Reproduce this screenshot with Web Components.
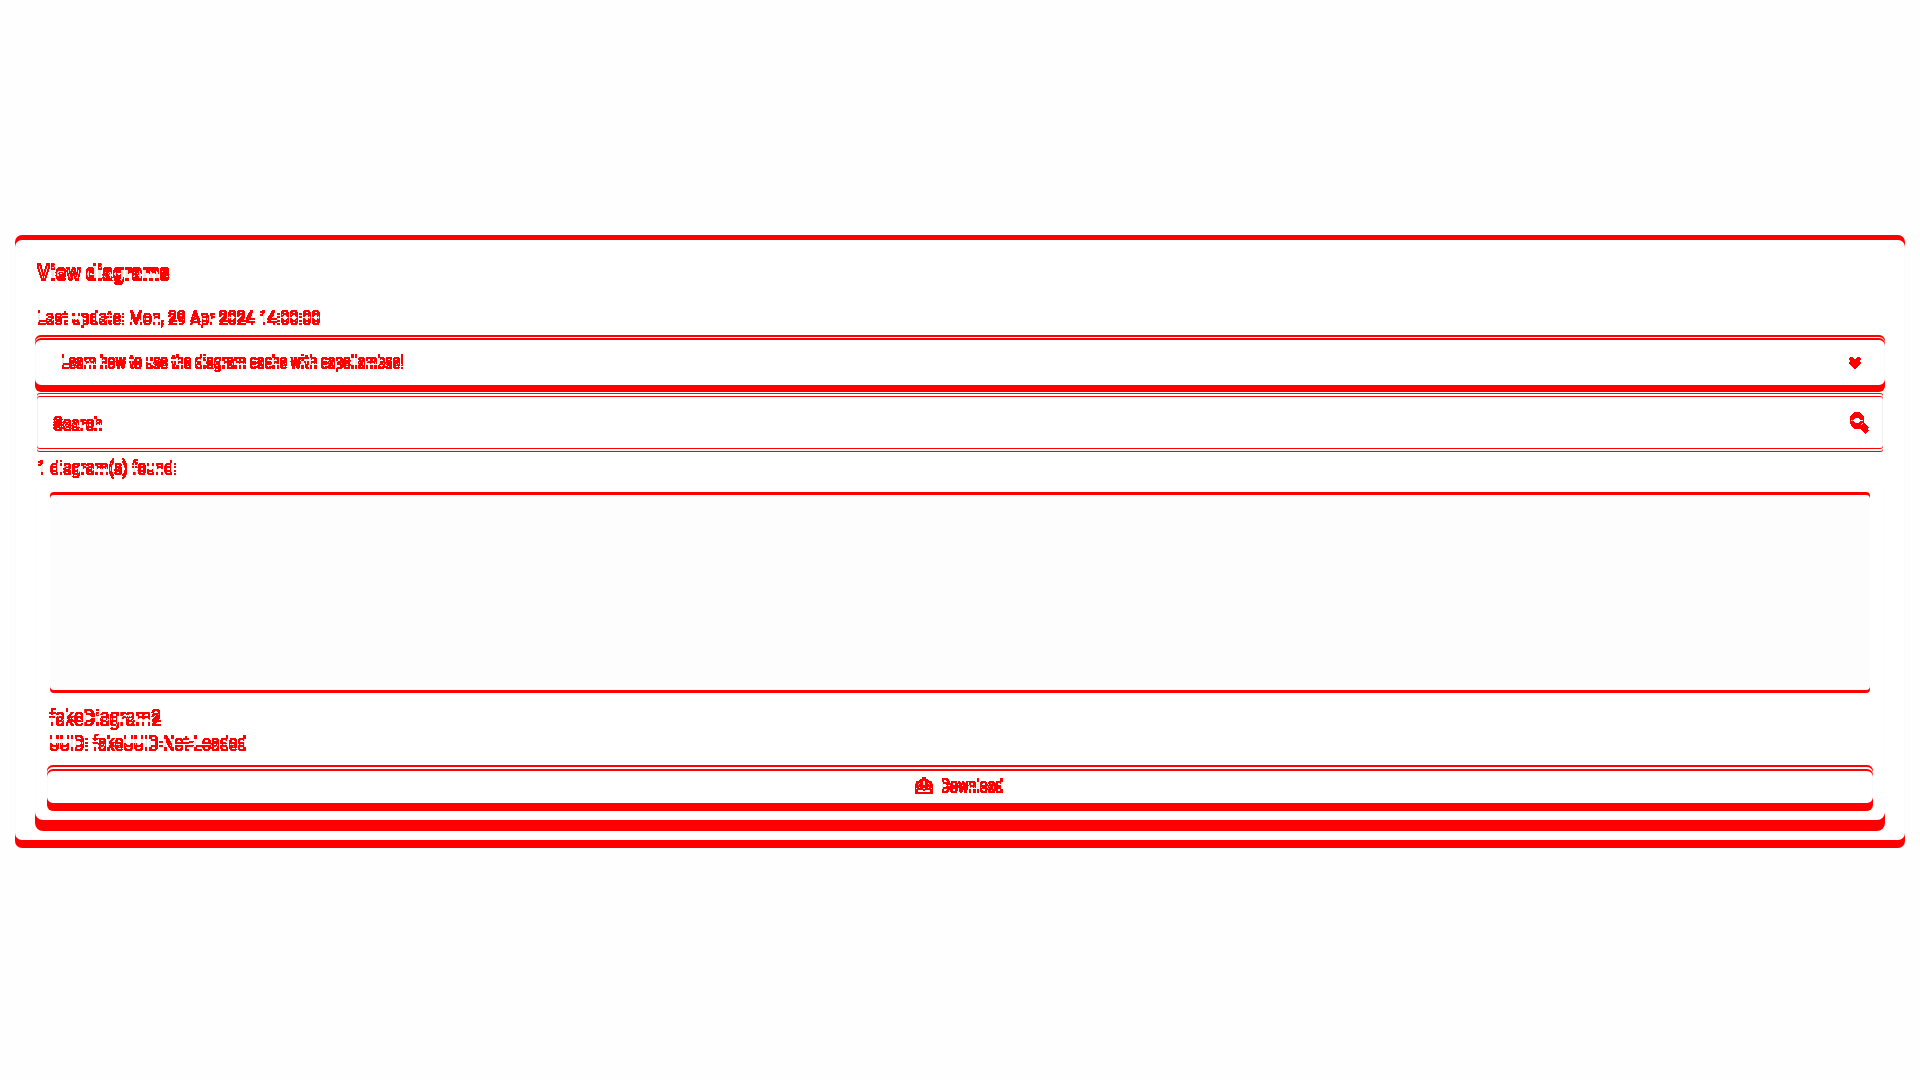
<!DOCTYPE html>
<html lang="en">
<head>
<meta charset="utf-8">
<title>View diagrams</title>
<style>
html { background: #fefefe; }
body {
  margin: 0; min-height: 100vh; box-sizing: border-box; padding: 3px 15px 0;
  display: flex; flex-direction: column; justify-content: center;
  font-family: Roboto, sans-serif; font-size: 16px; line-height: 24px; color: #222;
  --red: #f00; --edge: #fbfbfb;
}
</style>
</head>
<body>
<view-card>
  <edge-text slot="title" size="20" weight="700" shift="3">View diagrams</edge-text>
  <edge-text slot="updated" size="16" shift="3">Last update: Mon, 29 Apr 2024 14:00:00</edge-text>
  <help-panel>Learn how to use the diagram cache with capellambse!</help-panel>
  <search-box></search-box>
  <edge-text slot="count" size="16" shift="3">1 diagram(s) found:</edge-text>
  <diagram-card slot="result" name="fakeDiagram2" uuid="fakeUUID-Not-Loaded"></diagram-card>
</view-card>
<script>
// Outlines whatever changes between a shape and its copy moved down by dy.
const edgeFilter = dy => `
<svg class="defs" width="0" height="0" aria-hidden="true">
  <filter id="edge" x="-5%" y="-30%" width="110%" height="160%" color-interpolation-filters="sRGB">
    <feOffset in="SourceAlpha" dy="${dy}" result="low"/>
    <feComposite in="SourceAlpha" in2="low" operator="arithmetic" k2="1" k3="-1" result="a"/>
    <feComposite in="low" in2="SourceAlpha" operator="arithmetic" k2="1" k3="-1" result="b"/>
    <feMerge result="both"><feMergeNode in="a"/><feMergeNode in="b"/></feMerge>
    <feColorMatrix in="both" values="0 0 0 0 1  0 0 0 0 0  0 0 0 0 0  0 0 0 80 -0.5" result="red"/>
    <feColorMatrix in="SourceAlpha" values="0 0 0 0 0  0 0 0 0 0  0 0 0 0 0  0 0 0 .1 0" result="faint"/>
    <feMerge><feMergeNode in="faint"/><feMergeNode in="red"/></feMerge>
  </filter>
</svg>`;
const base = `*{box-sizing:border-box} .defs{position:absolute} .edge{filter:url(#edge)}`;

customElements.define('edge-text', class extends HTMLElement {
  connectedCallback() {
    const size = this.getAttribute('size') || 16;
    this.attachShadow({mode: 'open'}).innerHTML = `<style>${base}
      :host{display:block;font-size:${size}px;font-weight:${this.getAttribute('weight') || 400}}
      span{display:inline-block;white-space:nowrap}</style>
      ${edgeFilter(this.getAttribute('shift'))}<span class="edge"><slot></slot></span>`;
  }
});

customElements.define('view-card', class extends HTMLElement {
  connectedCallback() {
    this.attachShadow({mode: 'open'}).innerHTML = `<style>${base}
      :host{display:block;box-sizing:border-box;background:#fff;border-radius:7px;padding:24px 20px 17px;
        box-shadow:inset 0 5px var(--red),inset 0 -8px var(--red),inset 0 0 0 1px var(--edge)}
      header{padding:0 2px;display:flex;flex-direction:column;gap:22px;margin-bottom:6px}
      h1{margin:0;font:inherit}
      .count{padding:3px 2px 4px}</style>
      <header><h1><slot name="title"></slot></h1><slot name="updated"></slot></header>
      <slot></slot>
      <div class="count"><slot name="count"></slot></div>
      <slot name="result"></slot>`;
  }
});

customElements.define('help-panel', class extends HTMLElement {
  connectedCallback() {
    this.attachShadow({mode: 'open'}).innerHTML = `<style>${base}
      :host{display:block;margin-bottom:1px}
      button{display:flex;width:100%;align-items:center;justify-content:space-between;height:57px;margin:0;
        background:#fff;color:inherit;font:inherit;padding:0 23px 8px 26px;border:0;border-radius:6px;
        box-shadow:inset 0 2px var(--red),inset 0 3px #fff,inset 0 5px var(--red),inset 0 -7px var(--red),inset 0 0 0 1px var(--edge)}
      svg.edge{display:block}</style>
      ${edgeFilter(4)}
      <button type="button" aria-expanded="false"><edge-text size="14" weight="500" shift="4"><slot></slot></edge-text>
        <svg class="edge" width="14" height="14" viewBox="0 0 14 14" aria-hidden="true"><path d="M1 5.500 3.500 4 7 7 10.500 4 13 5.500 7 12z" fill="#222"/></svg>
      </button>`;
  }
});

customElements.define('search-box', class extends HTMLElement {
  connectedCallback() {
    this.attachShadow({mode: 'open'}).innerHTML = `<style>${base}
      :host{display:flex;box-sizing:border-box;align-items:center;height:59px;margin:0 2px;padding:0 14px 0 16px;background:#fff;border-radius:3px;
        box-shadow:inset 0 1px var(--red),inset 0 3px #fff,inset 0 4px var(--red),
          inset 0 -1px var(--red),inset 0 -3px #fff,inset 0 -4px var(--red),inset 0 0 0 1px #f2f2f2}
      input{flex:1;min-width:0;border:0;outline:0;padding:0;background:none;font:inherit;font-weight:500;color:inherit}
      input::placeholder{color:#222;opacity:1}
      svg.edge{display:block}</style>
      ${edgeFilter(3)}
      <input class="edge" type="text" placeholder="Search" aria-label="Search">
      <svg class="edge" width="20" height="22" viewBox="0 0 20 22" aria-hidden="true"><circle cx="8" cy="7" r="5.500" fill="none" stroke="#222" stroke-width="2"/><path d="M12 11l6 6" stroke="#222" stroke-width="3.500"/></svg>`;
  }
});

customElements.define('diagram-card', class extends HTMLElement {
  connectedCallback() {
    this.attachShadow({mode: 'open'}).innerHTML = `<style>${base}
      :host{display:block;box-sizing:border-box;border-radius:8px;padding:9px 12px 20px;background:#fff;
        box-shadow:inset 0 -11px var(--red),inset 0 0 0 1px #fdfdfd}
      .thumb{height:201px;margin:0 3px;background:#fdfdfd;border-radius:4px;
        box-shadow:inset 0 3px var(--red),inset 0 -3px var(--red)}
      .info{padding:11px 2px;display:flex;flex-direction:column;gap:2px}
      button{display:flex;width:100%;height:46px;margin:0;padding:0 2px 8px 0;align-items:center;justify-content:center;gap:8px;
        background:#fff;color:inherit;font:inherit;border:0;border-radius:6px;
        box-shadow:inset 0 2px var(--red),inset 0 4px #fff,inset 0 6px var(--red),inset 0 -8px var(--red),inset 0 0 0 1px var(--edge)}
      svg.edge{display:block}</style>
      ${edgeFilter(4)}
      <div class="thumb"></div>
      <div class="info">
        <edge-text size="18" shift="4">${this.getAttribute('name')}</edge-text>
        <edge-text size="16" shift="4">UUID: ${this.getAttribute('uuid')}</edge-text>
      </div>
      <button type="button">
        <svg class="edge" width="18" height="16" viewBox="0 0 18 16" aria-hidden="true"><path d="M9 1v6M5 4.500 9 8.500 13 4.500" fill="none" stroke="#222" stroke-width="3"/><path d="M5 6H3L1.500 9v4h15V9L15 6H13" fill="none" stroke="#222" stroke-width="2" stroke-linejoin="round"/></svg>
        <edge-text size="14" weight="500" shift="4">Download</edge-text>
      </button>`;
  }
});
</script>
</body>
</html>
